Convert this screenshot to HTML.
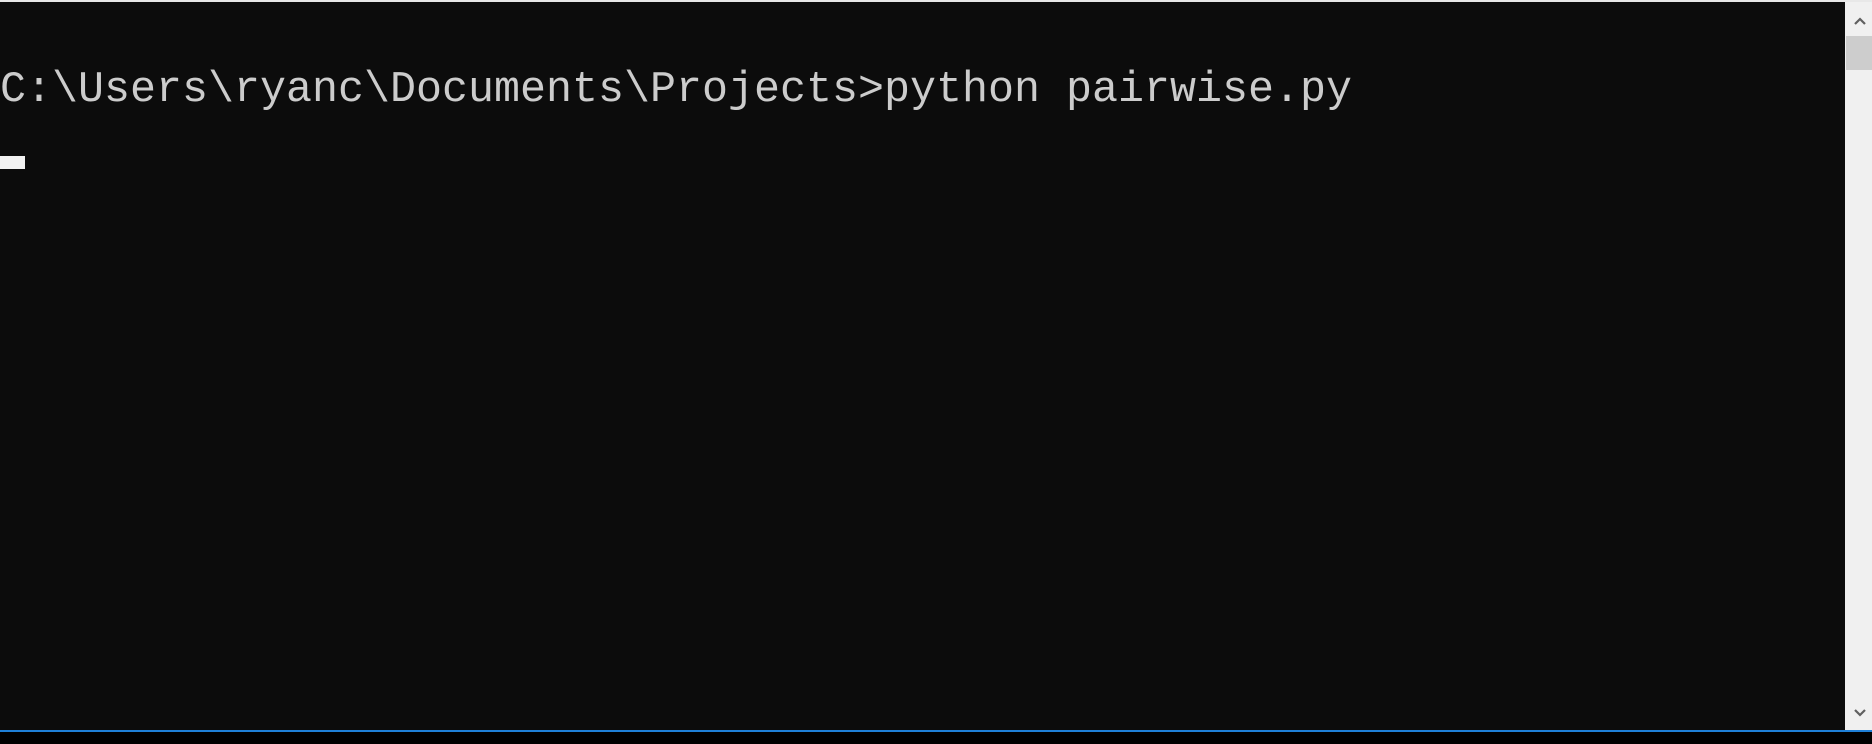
<!DOCTYPE html>
<html><head><meta charset="utf-8"><style>
html,body{margin:0;padding:0;width:1872px;height:744px;overflow:hidden;background:#0c0c0c;position:relative}
.top{position:absolute;left:0;top:0;width:1872px;height:2px;background:#e8e8e8}
.t{position:absolute;left:0;top:69px;font-family:"Liberation Mono",monospace;font-size:43.33px;line-height:43px;color:#cccccc;white-space:pre}
.cur{position:absolute;left:0;top:156px;width:25px;height:13px;background:#f2f2f2}
.sb{position:absolute;left:1845px;top:2px;width:27px;height:728px;background:#f0f0f0}
.th{position:absolute;left:1846px;top:36px;width:26px;height:34px;background:#cdcdcd}
.blue{position:absolute;left:0;top:730px;width:1872px;height:2px;background:#1e7fd6}
.bot{position:absolute;left:0;top:732px;width:1872px;height:12px;background:#000}
svg{position:absolute}
</style></head><body>
<div class="top"></div>
<div class="t">C:\Users\ryanc\Documents\Projects&gt;python pairwise.py</div>
<div class="cur"></div>
<div class="sb"></div>
<div class="th"></div>
<svg style="left:1853px;top:15px" width="14" height="12" viewBox="0 0 14 12"><path d="M2 9 L7 4 L12 9" stroke="#606060" stroke-width="2.2" fill="none"/></svg>
<svg style="left:1853px;top:707px" width="14" height="12" viewBox="0 0 14 12"><path d="M2 3 L7 8 L12 3" stroke="#606060" stroke-width="2.2" fill="none"/></svg>
<div class="blue"></div>
<div class="bot"></div>
</body></html>
